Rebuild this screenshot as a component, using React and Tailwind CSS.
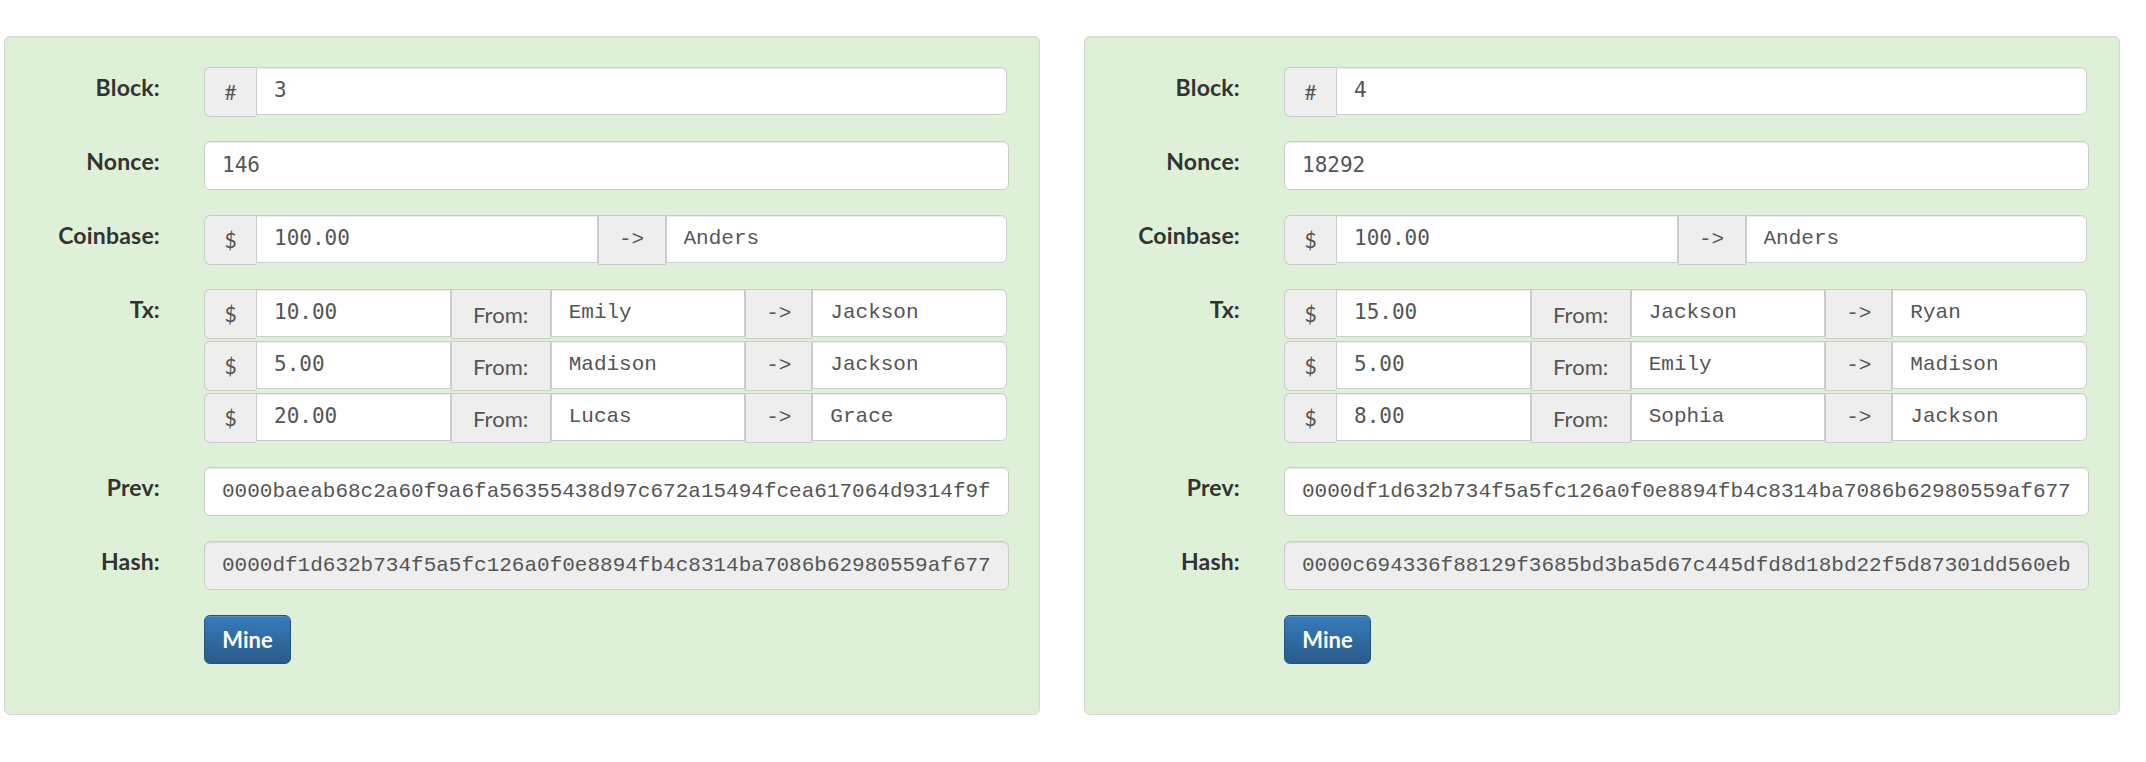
const blocks = [
  {
    number: "3",
    nonce: "146",
    coinbase: { amount: "100.00", to: "Anders" },
    txs: [
      { amount: "10.00", from: "Emily", to: "Jackson" },
      { amount: "5.00", from: "Madison", to: "Jackson" },
      { amount: "20.00", from: "Lucas", to: "Grace" },
    ],
    prev: "0000baeab68c2a60f9a6fa56355438d97c672a15494fcea617064d9314f9f",
    hash: "0000df1d632b734f5a5fc126a0f0e8894fb4c8314ba7086b62980559af677",
  },
  {
    number: "4",
    nonce: "18292",
    coinbase: { amount: "100.00", to: "Anders" },
    txs: [
      { amount: "15.00", from: "Jackson", to: "Ryan" },
      { amount: "5.00", from: "Emily", to: "Madison" },
      { amount: "8.00", from: "Sophia", to: "Jackson" },
    ],
    prev: "0000df1d632b734f5a5fc126a0f0e8894fb4c8314ba7086b62980559af677",
    hash: "0000c694336f88129f3685bd3ba5d67c445dfd8d18bd22f5d87301dd560eb",
  },
];

const sans = "font-['Lato',sans-serif]";
const courier = "font-['Liberation_Mono','Courier_New',monospace]";
const numeric = "font-['DejaVu_Sans_Mono',monospace]";

function Label({ children }) {
  return (
    <div
      className={`w-[155px] shrink-0 pt-[7px] text-right text-[23px] font-bold leading-[1.2] tracking-[0.2px] text-[#333] ${sans}`}
    >
      {children}
    </div>
  );
}

function FirstAddon({ children }) {
  return (
    <div
      className={`flex h-[50px] w-[52px] shrink-0 items-center justify-center rounded-l-[6px] border-y border-l border-[#ccc] bg-[#eee] text-[21px] text-[#555] ${sans}`}
    >
      {children}
    </div>
  );
}

function MidAddon({ children, className = "" }) {
  return (
    <div
      className={`flex h-[50px] shrink-0 items-center justify-center border border-[#ccc] bg-[#eee] text-[#555] ${className}`}
    >
      {children}
    </div>
  );
}

function Field({ children, font, last = false }) {
  return (
    <div
      className={`flex h-[48px] min-w-0 flex-1 items-center border border-[#ccc] bg-white px-[17px] text-[21px] text-[#555] shadow-[inset_0_1px_1px_rgba(0,0,0,0.075)] ${font} ${
        last ? "rounded-r-[6px]" : ""
      }`}
    >
      <div className="min-w-0 flex-1 overflow-hidden whitespace-nowrap">{children}</div>
    </div>
  );
}

function PlainField({ children, font, disabled = false }) {
  return (
    <div className="h-[50px] w-[805px] shrink-0">
      <div
        className={`flex h-[49px] items-center rounded-[6px] border border-[#ccc] px-[17px] text-[21px] text-[#555] shadow-[inset_0_1px_1px_rgba(0,0,0,0.075)] ${font} ${
          disabled ? "bg-[#eee]" : "bg-white"
        }`}
      >
        <div className="min-w-0 flex-1 overflow-hidden whitespace-nowrap">{children}</div>
      </div>
    </div>
  );
}

function Row({ label, children }) {
  return (
    <div className="flex items-start gap-[44px]">
      <Label>{label}</Label>
      {children}
    </div>
  );
}

function Block({ block }) {
  return (
    <div className="h-[679px] w-[1036px] shrink-0 rounded-[6px] border border-[#d3d9d0] bg-[#dff0d8] pt-[30px] shadow-[inset_0_1px_1px_rgba(0,0,0,0.05)]">
      <div className="flex flex-col gap-[24px]">
        <Row label="Block:">
          <div className="flex w-[803px] items-start">
            <FirstAddon>#</FirstAddon>
            <Field font={numeric} last>
              {block.number}
            </Field>
          </div>
        </Row>

        <Row label="Nonce:">
          <PlainField font={numeric}>{block.nonce}</PlainField>
        </Row>

        <Row label="Coinbase:">
          <div className="flex w-[803px] items-start">
            <FirstAddon>$</FirstAddon>
            <Field font={numeric}>{block.coinbase.amount}</Field>
            <MidAddon className={`w-[68px] text-[21px] ${courier}`}>-&gt;</MidAddon>
            <Field font={courier} last>
              {block.coinbase.to}
            </Field>
          </div>
        </Row>

        <Row label="Tx:">
          <div className="flex w-[803px] flex-col gap-[2px]">
            {block.txs.map((tx, i) => (
              <div className="flex items-start" key={i}>
                <FirstAddon>$</FirstAddon>
                <Field font={numeric}>{tx.amount}</Field>
                <MidAddon className={`w-[100px] text-[22px] ${sans}`}>From:</MidAddon>
                <Field font={courier}>{tx.from}</Field>
                <MidAddon className={`w-[67px] text-[21px] ${courier}`}>-&gt;</MidAddon>
                <Field font={courier} last>
                  {tx.to}
                </Field>
              </div>
            ))}
          </div>
        </Row>

        <Row label="Prev:">
          <PlainField font={courier}>{block.prev}</PlainField>
        </Row>

        <Row label="Hash:">
          <PlainField font={courier} disabled>
            {block.hash}
          </PlainField>
        </Row>

        <Row label="">
          <button
            className={`h-[49px] w-[87px] rounded-[6px] border border-[#245580] bg-gradient-to-b from-[#377cba] to-[#285b8a] text-[22px] font-bold text-white shadow-[inset_0_1px_0_rgba(255,255,255,0.15)] ${sans}`}
            type="button"
          >
            Mine
          </button>
        </Row>
      </div>
    </div>
  );
}

export default function App() {
  return (
    <div className="flex h-[762px] w-[2146px] gap-[44px] bg-white pl-[4px] pt-[36px]">
      {blocks.map((block) => (
        <Block block={block} key={block.number} />
      ))}
    </div>
  );
}
